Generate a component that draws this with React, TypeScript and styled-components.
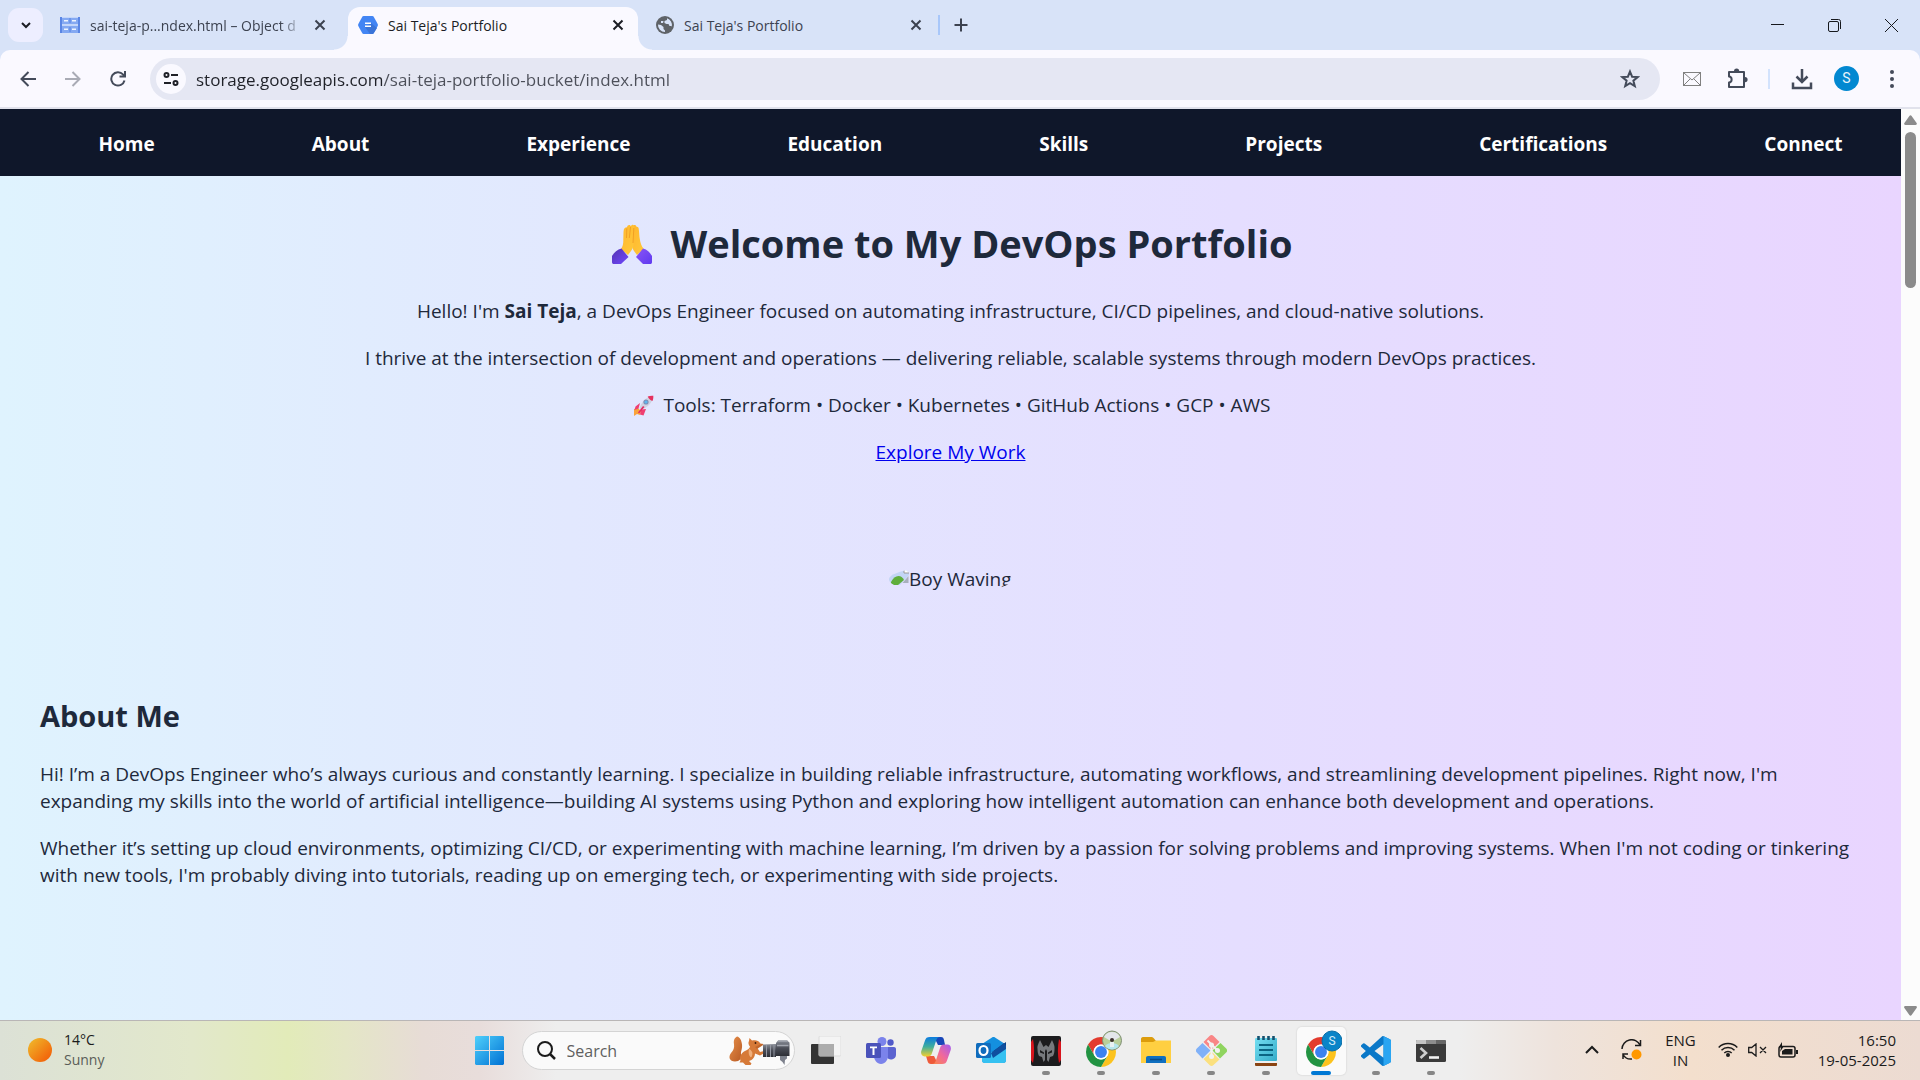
import React from "react";
import styled, { createGlobalStyle, css } from "styled-components";

const ui = `"Segoe UI", "Open Sans", "Noto Sans", sans-serif`;

const GlobalStyle = createGlobalStyle`
  * { box-sizing: border-box; }
  html, body { margin: 0; padding: 0; }
  body { font-family: ${ui}; overflow: hidden; }
  button { font: inherit; color: inherit; border: 0; padding: 0; background: none; cursor: pointer; }
  svg { display: block; flex: none; }
`;

/* ---------- window ---------- */

const Desktop = styled.div`
  display: flex;
  flex-direction: column;
  height: 100vh;
  overflow: hidden;
`;

const TabStrip = styled.header`
  flex: none;
  display: flex;
  align-items: flex-start;
  height: 50px;
  padding-left: 8px;
  background: #d8e3f8;
  color: #3c4250;
`;

const TabSearch = styled.button`
  display: grid;
  place-items: center;
  width: 35px;
  height: 34px;
  margin: 8px 7px 0 0;
  border-radius: 11px;
  background: #edeeff;
  color: #1b1d24;
`;

const Tabs = styled.div`
  display: flex;
  gap: 8px;
`;

const Tab = styled.div<{ $active?: boolean }>`
  position: relative;
  display: flex;
  align-items: center;
  width: 290px;
  height: 43px;
  margin-top: 7px;
  padding: 0 10px 8px 10px;
  border-radius: 12px 12px 0 0;
  ${(p) =>
    p.$active &&
    css`
      background: #faf9ff;
      color: #1b1d24;
      &::before,
      &::after {
        content: "";
        position: absolute;
        bottom: 0;
        width: 14px;
        height: 14px;
      }
      &::before {
        right: 100%;
        background: radial-gradient(circle at 0 0, transparent 13px, #faf9ff 14px);
      }
      &::after {
        left: 100%;
        background: radial-gradient(circle at 100% 0, transparent 13px, #faf9ff 14px);
      }
    `}
`;

const TabTitle = styled.button<{ $fade?: boolean }>`
  flex: 1;
  min-width: 0;
  margin-left: 10px;
  padding-top: 2px;
  overflow: hidden;
  white-space: nowrap;
  text-align: left;
  font-size: 14px;
  line-height: 20px;
  ${(p) =>
    p.$fade &&
    css`
      mask-image: linear-gradient(to right, #000 190px, transparent 214px);
    `}
`;

const TabClose = styled.button`
  display: grid;
  place-items: center;
  width: 20px;
  height: 20px;
`;

const StripRule = styled.span`
  width: 2px;
  height: 20px;
  margin: 15px 12px 0 2px;
  background: #a8c7fa;
`;

const NewTab = styled.button`
  display: grid;
  place-items: center;
  width: 18px;
  height: 50px;
`;

const WindowButtons = styled.div`
  display: flex;
  margin-left: auto;
  color: #16181d;
`;

const WindowButton = styled.button`
  display: grid;
  place-items: center;
  width: 57px;
  height: 50px;
`;

const ToolbarBack = styled.div`
  flex: none;
  background: #d8e3f8;
`;

const Toolbar = styled.div`
  display: flex;
  align-items: center;
  height: 59px;
  padding: 0 6px 0 5px;
  border-bottom: 2px solid #e1e2ec;
  border-radius: 10px 10px 0 0;
  background: #faf9ff;
  color: #444b5a;
`;

const ToolButton = styled.button<{ $dim?: boolean }>`
  display: grid;
  place-items: center;
  flex: none;
  width: 45px;
  height: 40px;
  color: ${(p) => (p.$dim ? "#a9abb5" : "inherit")};
`;

const AddressBar = styled.div`
  flex: 1;
  display: flex;
  align-items: center;
  height: 42px;
  margin: 0 9px 0 10px;
  padding: 0 20px 0 6px;
  border-radius: 21px;
  background: #e5e7f3;
`;

const SiteInfo = styled.button`
  display: grid;
  place-items: center;
  width: 30px;
  height: 30px;
  border-radius: 50%;
  background: #faf9ff;
  color: #1f2128;
`;

const Address = styled.input`
  flex: 1;
  min-width: 0;
  margin-left: 10px;
  padding: 2px 0 0;
  border: 0;
  outline: 0;
  font-family: ${ui};
  font-size: 17px;
  line-height: 26px;
  color: transparent;
  background: linear-gradient(to right, #1f2128 187px, #4c4f59 187px);
  background-clip: text;
  -webkit-background-clip: text;
`;

const ToolRule = styled.span`
  width: 2px;
  height: 20px;
  margin: 0 9px;
  background: #d3e3fd;
`;

const Avatar = styled.span`
  display: grid;
  place-items: center;
  width: 25px;
  height: 25px;
  border-radius: 50%;
  background: #0288d1;
  color: #e8f4fb;
  font: 14px/25px Roboto, sans-serif;
`;

/* ---------- web page ---------- */

const Viewport = styled.div`
  flex: 1;
  min-height: 0;
  display: flex;
`;

const Page = styled.div`
  flex: 1;
  min-width: 0;
  overflow: hidden;
  background: linear-gradient(to right, #dff3fe, #e2e8fe 30%, #e5deff 65%, #e9d5ff);
  color: #1e293b;
  font-size: 19px;
  line-height: 27px;
`;

const Nav = styled.nav`
  overflow: hidden;
  background: #0f172a;
`;

const NavList = styled.ul`
  display: flex;
  justify-content: space-around;
  margin: 0 -20px 0 20px;
  padding: 22px 0 18px;
  list-style: none;
`;

const NavLink = styled.a`
  color: #fff;
  font-weight: 700;
  text-decoration: none;
`;

const Hero = styled.section`
  padding: 41px 40px 50px;
  text-align: center;
`;

const HeroTitle = styled.h1`
  display: flex;
  align-items: center;
  justify-content: center;
  margin: 0 0 28px;
  font-size: 38px;
  line-height: 53px;

  svg {
    margin: 0 18px 0 4px;
  }
`;

const Text = styled.p`
  margin: 0 0 20px;
`;

const ToolsLine = styled(Text)`
  display: flex;
  align-items: center;
  justify-content: center;

  svg {
    margin: 0 9px 0 3px;
  }
`;

const ExploreLink = styled.a`
  color: #0000ee;
  text-decoration: underline;
`;

const Portrait = styled.div`
  display: flex;
  width: 123px;
  height: 27px;
  margin: 100px auto 0;
  overflow: hidden;
  border-radius: 50%;
  white-space: nowrap;
`;

const About = styled.section`
  padding: 53px 40px;
`;

const SectionTitle = styled.h2`
  margin: 0 0 25px;
  font-size: 29px;
  line-height: 40px;
`;

const ScrollTrack = styled.div`
  display: flex;
  flex-direction: column;
  align-items: center;
  width: 19px;
  padding: 6px 0 4px;
  background: #fcfcfc;
`;

const ScrollThumb = styled.div`
  width: 11px;
  height: 156px;
  margin: 7px 0 auto;
  border-radius: 6px;
  background: #8b8b8b;
`;

/* ---------- taskbar ---------- */

const Taskbar = styled.footer`
  flex: none;
  display: grid;
  grid-template-columns: 1fr auto 1fr;
  height: 60px;
  border-top: 1px solid #b9b6b6;
  background: linear-gradient(
    to right,
    #dce1d6 0,
    #e2e8cb 10%,
    #e2ebb9 15%,
    #e4e6c6 18%,
    #e7dcd6 22%,
    #e8dddb 25%,
    #eeeeee 29%,
    #eeeeee 76%,
    #eee3dc 81%,
    #f3dfcd 88%,
    #ecdbd2 100%
  );
  color: #1b1b1b;
  font-size: 15px;
  line-height: 20px;
`;

const Weather = styled.button`
  display: flex;
  align-items: center;
  gap: 12px;
  padding: 0 0 2px 28px;
  text-align: left;
  font-size: 14px;

  small {
    display: block;
    font-size: 14px;
    color: #5a5d58;
  }
`;

const Apps = styled.div`
  display: flex;
  align-items: center;
`;

const AppButton = styled.button<{ $active?: boolean }>`
  position: relative;
  display: grid;
  place-items: center;
  width: 55px;
  height: 58px;
  ${(p) =>
    p.$active &&
    css`
      &::before {
        content: "";
        position: absolute;
        inset: 5px 3px;
        border-radius: 5px;
        background: #fafafa;
        box-shadow: 0 0 1px 1px #e2e2e2;
      }
      svg {
        position: relative;
      }
    `}
`;

const Running = styled.span<{ $active?: boolean }>`
  position: absolute;
  bottom: 5px;
  left: 50%;
  transform: translateX(-50%);
  width: ${(p) => (p.$active ? 20 : 8)}px;
  height: 4px;
  border-radius: 2px;
  background: ${(p) => (p.$active ? "#0078d4" : "#868686")};
`;

const SearchBox = styled.label`
  display: flex;
  align-items: center;
  width: 273px;
  height: 39px;
  margin: 0 4px 0 5px;
  padding: 0 4px 0 14px;
  border: 1px solid #d4d4d4;
  border-radius: 20px;
  background: #fafafa;
`;

const SearchInput = styled.input`
  flex: 1;
  min-width: 0;
  margin-left: 11px;
  padding: 0;
  border: 0;
  outline: 0;
  background: none;
  font-family: ${ui};
  font-size: 16px;
  color: #1b1b1b;

  &::placeholder {
    color: #5f5f5f;
    opacity: 1;
  }
`;

const Tray = styled.div`
  display: flex;
  align-items: center;
  justify-content: flex-end;
  padding: 0 24px 2px 0;
`;

const TrayButton = styled.button<{ $gap?: number }>`
  margin-right: ${(p) => p.$gap ?? 0}px;
  text-align: center;
`;

const Clock = styled.button`
  text-align: right;
`;

/* ---------- icons ---------- */

type Shape = { w?: number; h?: number; box?: string; children: React.ReactNode; stroke?: number };

const Line = ({ w = 20, h = w, box = `0 0 ${w} ${h}`, stroke = 2, children }: Shape) => (
  <svg width={w} height={h} viewBox={box} fill="none" stroke="currentColor" strokeWidth={stroke} aria-hidden="true">
    {children}
  </svg>
);

const CloseIcon = () => (
  <Line w={12}>
    <path d="M1.5 1.5l9 9M10.5 1.5l-9 9" />
  </Line>
);

const BucketIcon = () => (
  <svg width="20" height="18" viewBox="0 0 20 18" aria-hidden="true">
    <path d="M0 1h20v16H0z" fill="#85a9f2" />
    <path d="M0 1h2v16H0zM18 1h2v16h-2z" fill="#5b86e5" />
    <path d="M2 1h16v1H2zM2 8h16v2H2z" fill="#c4d6fa" />
    <path d="M4 4h4v1.500H4zM12 4h4v1.500h-4zM4 12.500h4V14H4zM12 12.500h4V14h-4z" fill="#eef4ff" />
    <path d="M9 2h2v5H9zM9 11h2v5H9z" fill="#6c95ea" />
  </svg>
);

const HexIcon = () => (
  <svg width="20" height="18" viewBox="0 0 20 18" aria-hidden="true">
    <path d="M5.600 0h8.800c.6 0 1 .3 1.300.8l4 7.200c.3.600.3 1.300 0 1.900l-4 7.300c-.3.500-.7.800-1.300.8H5.600c-.6 0-1-.3-1.300-.8L.3 9.900C0 9.300 0 8.700.3 8.100l4-7.300C4.600.3 5 0 5.600 0z" fill="#4285f4" />
    <path d="M13 7l6 5-3.300 5.200c-.3.500-.7.800-1.300.8H12L7 11z" fill="#3a74d8" />
    <path d="M7 6.500h6V8H7zM7 9.500h6V11H7z" fill="#fff" />
  </svg>
);

const GlobeIcon = () => (
  <svg width="18" height="18" viewBox="0 0 18 18" aria-hidden="true">
    <circle cx="9" cy="9" r="9" fill="#5f6368" />
    <path d="M2 8.500l3 .5 2.500 2v2L9 14.500V16A7 7 0 012 8.500zM11 2.300V4L8.500 5v2l2 1h2l1 2h1.500l.8.500A7 7 0 0011 2.300zM5 5h2.500L7 7H5z" fill="#d8e3f8" />
  </svg>
);

const Hands = () => (
  <svg width="40" height="40" viewBox="0 0 40 40" role="img" aria-label="Folded hands">
    <defs>
      <linearGradient id="skin" x1="0" y1="0" x2="1" y2="1">
        <stop offset="0" stopColor="#ffb62e" />
        <stop offset="1" stopColor="#ffc93a" />
      </linearGradient>
      <linearGradient id="cuffL" x1="0" y1="0" x2="1" y2="1">
        <stop offset="0" stopColor="#5433b0" />
        <stop offset="1" stopColor="#7048ff" />
      </linearGradient>
      <linearGradient id="cuffR" x1="0" y1="0" x2="1" y2="1">
        <stop offset="0" stopColor="#8a55f5" />
        <stop offset="1" stopColor="#5f3af0" />
      </linearGradient>
    </defs>
    <path d="M21 2.500C21.500.5 24 .5 24.500 2.800c1.600-.2 2.300 1 2.300 2.700.5 3.500.4 6.500 1 9.500.6 3.700 1.500 7 4 10L25 31l-3-4c-1.500-2-1.500-4-1.500-7z" fill="url(#skin)" />
    <path d="M15 3.200c.5-2.600 3-3 3.800-1C20-.2 22.300.3 22.200 2.800L21.500 20c-.2 3-.9 5-2.500 7l-3 4-7-6c2-3 2.400-6 2.300-9.500L11.500 8c.1-3.500 1.500-4.800 3.500-4.800z" fill="url(#skin)" />
    <path d="M21.800 4L21 19M18.500 3l-1.200 11M14.800 4.500L14.500 14" stroke="#ee9720" strokeWidth=".8" fill="none" />
    <path d="M9.500 24.500l7 8.500L9 40H2c-1.300 0-2-.6-2-2v-6c2-3.500 5.500-6.500 9.500-7.500z" fill="url(#cuffL)" />
    <path d="M31 24.500L24 33l7 7h7c1.300 0 2-.6 2-2v-6c-2-3.500-5-6.500-9-7.500z" fill="url(#cuffR)" />
  </svg>
);

const Rocket = () => (
  <svg width="21" height="21" viewBox="0 0 21 21" role="img" aria-label="Rocket">
    <path d="M1 14l4-1 3 3-1 4-3-1-3 2z" fill="#f9a23b" />
    <path d="M7 8L2.500 11.500 1.500 15l4-1.500zM13 14l-2.500 6.500-3.500-1 1-5z" fill="#ef3f72" />
    <path d="M20 1c-6 0-11 5-13.500 12l1.500 1.800C15 12 20 7.500 20 1z" fill="#cfd3e2" />
    <path d="M20.300.7c-2-.2-4 .1-5.600.9 1 2 2.500 3.500 4.700 4.500.8-1.600 1.100-3.500.9-5.400z" fill="#e5325f" />
    <circle cx="13" cy="7" r="2.600" fill="#7f8db5" />
    <circle cx="13" cy="7" r="1.600" fill="#5cb8ee" />
    <path d="M10 11l-5 6.500 1 1L11.500 12z" fill="#e22b63" />
  </svg>
);

const BrokenImage = () => (
  <svg width="20" height="20" viewBox="0 0 20 20" aria-hidden="true">
    <path d="M0 2h15l5 5v12H0z" fill="#c3d5f5" />
    <path d="M15 2v5h5" fill="#fff" stroke="#9a9a9a" />
    <path d="M2 16c2-4 4.500-6 7.500-6 2.500 0 4 1.500 5.500 4l-6 5H2z" fill="#5fae3c" />
    <path d="M20 9l-9 10h9z" fill="#e4e1ff" />
    <path d="M19.500 10v7h-6z" fill="#a8b0bd" />
    <path d="M2 2.500h13" stroke="#9a9a9a" />
  </svg>
);

const ArrowHead = ({ down }: { down?: boolean }) => (
  <svg width="13" height="10" viewBox="0 0 13 10" aria-hidden="true">
    <path d={down ? "M1.500 0h10c1.200 0 1.800 1 1.100 2L7.600 9c-.6.900-1.600.9-2.200 0L.4 2C-.3 1 .3 0 1.500 0z" : "M1.500 10h10c1.200 0 1.800-1 1.100-2L7.600 1C7 .1 6 .1 5.400 1L.4 8c-.7 1-.1 2 1.100 2z"} fill="#8b8b8b" />
  </svg>
);

const ChromeShapes = () => (
  <>
    <path d="M3.220 12A24 24 0 0144.780 12H24A12 12 0 0013.610 30z" fill="#e33b2e" />
    <path d="M44.780 12A24 24 0 0124 48L34.390 30A12 12 0 0024 12z" fill="#fcc31e" />
    <path d="M24 48A24 24 0 013.220 12L13.610 30A12 12 0 0034.390 30z" fill="#229342" />
    <circle cx="24" cy="24" r="12" fill="#fff" />
    <circle cx="24" cy="24" r="9.500" fill="#3b82f0" />
  </>
);

const ChromeIcon = ({ work }: { work?: boolean }) => (
  <svg width="42" height="42" viewBox="0 0 42 42" aria-hidden="true">
    <g transform="translate(6 7) scale(.625)">
      <ChromeShapes />
    </g>
    {work ? (
      <>
        <circle cx="32" cy="11" r="10" fill="#0a84c8" stroke="#0b6fa8" />
        <text x="32" y="15" textAnchor="middle" fontFamily="Roboto, sans-serif" fontSize="12" fill="#d5ecf8">
          S
        </text>
      </>
    ) : (
      <>
        <circle cx="32" cy="10.500" r="9.500" fill="#b9cf9a" stroke="#7f8f75" />
        <path d="M24 7a9 9 0 0116 0l-5 3h-6z" fill="#e3e6ea" />
        <path d="M25 16c3-4 11-4 14 0-3 4.500-11 4.500-14 0z" fill="#b5e6ec" />
        <circle cx="32" cy="10" r="2" fill="#3b302c" />
        <path d="M30 12h4v5h-4z" fill="#e8f1f2" />
      </>
    )}
  </svg>
);

const StartIcon = () => (
  <svg width="29" height="29" viewBox="0 0 29 29" aria-hidden="true">
    <defs>
      <linearGradient id="win" x1="0" y1="0" x2="1" y2="1">
        <stop offset="0" stopColor="#4fd0fb" />
        <stop offset="1" stopColor="#0071d4" />
      </linearGradient>
    </defs>
    <path d="M1 0h13v14H0V1zM15 0h13l1 1v13H15zM0 15h14v14H1l-1-1zM15 15h14v13l-1 1H15z" fill="url(#win)" />
  </svg>
);

const Squirrel = () => (
  <svg width="62" height="30" viewBox="0 0 62 30" aria-hidden="true">
    <defs>
      <linearGradient id="fur" x1="0" y1="0" x2="1" y2="1">
        <stop offset="0" stopColor="#e8904a" />
        <stop offset="1" stopColor="#b85a24" />
      </linearGradient>
      <linearGradient id="lens" x1="0" y1="0" x2="0" y2="1">
        <stop offset="0" stopColor="#8a8e98" />
        <stop offset=".5" stopColor="#4a4d57" />
        <stop offset="1" stopColor="#2d2f36" />
      </linearGradient>
    </defs>
    <path d="M9 .5C6 2 5.500 5 6 8c.5 4-.5 6-3 9-3 4-1.500 8.500 4 8.500 5 0 6.500-3 6-7-.4-3.500 1.500-5.500 1-10C13.600 4.500 12 1 9 .5z" fill="url(#fur)" />
    <path d="M21 5l.5-3 2.500 2.500c4-.7 6.500 0 8 2.500 1.500 1 1.500 2.200.5 3l-3.500 1.500 3 4.500 4-1 .5 2-4.500 2.500-5-2c0 3-1.500 5-3.500 6.500l-2.500 1 2.500 2.500-1 1.500h-5L15 26.500h-3.500l1-2c-1.500-3.500 1-8 4.500-9.500 3-1.200 4.500-2.500 5-4.500-1.500-1.500-2-3.500-1-5.500z" fill="#d67a38" />
    <path d="M21 13c3 1.500 4.500 4 2.500 8-2 1-3.500-4-2.500-8z" fill="#f0b07c" />
    <path d="M27 11l7-3.500 1.500 1.200L29 13z" fill="#c2662a" />
    <circle cx="27.500" cy="7" r=".9" fill="#3a1c0b" />
    <path d="M35 8.500l13-.5v13H35z" fill="url(#lens)" />
    <path d="M38.500 9v12M42.500 9v12M46 9v12" stroke="#9498a3" />
    <path d="M48 7l2-2.500h9l2.500 2V20H48z" fill="url(#lens)" />
    <path d="M50 5h9.500M49 9.500h11.500" stroke="#a3a6b0" strokeWidth="1.500" />
    <path d="M52 20h7v2.500L57 24l-.5 5-2-3-2.500-2z" fill="#7d818c" />
  </svg>
);

const TaskViewIcon = () => (
  <svg width="30" height="29" viewBox="0 0 30 29" aria-hidden="true">
    <rect x="0" y="8" width="23" height="20" rx="1" fill="#333" />
    <rect x="8" y="0" width="22" height="20" rx="1" fill="#f4f4f4" stroke="#dcdcdc" />
    <path d="M8 8h15v12H8z" fill="#acacac" />
  </svg>
);

const TeamsIcon = () => (
  <svg width="30" height="27" viewBox="0 0 30 27" aria-hidden="true">
    <circle cx="24.500" cy="5.500" r="3.200" fill="#5059c9" />
    <path d="M20 10h8c1 0 2 .8 2 2v5.500a5 5 0 01-9 3z" fill="#5b63d0" />
    <circle cx="16" cy="4.500" r="4.500" fill="#7b83eb" />
    <path d="M9 10h13v9c0 4-3 8-7 8s-7-4-7-8z" fill="#7b83eb" />
    <rect x="0" y="6" width="15" height="15" rx="1.500" fill="#4a52ba" />
    <path d="M4 9.500h7v1.800H8.500V18h-2v-6.700H4z" fill="#fff" />
  </svg>
);

const CopilotIcon = () => (
  <svg width="30" height="27" viewBox="0 0 30 27" aria-hidden="true">
    <defs>
      <linearGradient id="cpA" x1="0" y1="0" x2="0" y2="1">
        <stop offset="0" stopColor="#0a7be0" />
        <stop offset=".5" stopColor="#3fae9c" />
        <stop offset="1" stopColor="#f4cf2e" />
      </linearGradient>
      <linearGradient id="cpB" x1="1" y1="0" x2="0" y2="1">
        <stop offset="0" stopColor="#a35cf0" />
        <stop offset=".5" stopColor="#f0689c" />
        <stop offset="1" stopColor="#fc8b45" />
      </linearGradient>
    </defs>
    <path d="M13 0h7c2 0 2.500 1 3 3l1 5h-7z" fill="#1846b8" />
    <path d="M17 27h-7c-2 0-3-1-3.500-3L5 19h8z" fill="#ee5a3a" />
    <path d="M9 0h10c-2 0-3 1-4 4l-4 12c-.7 2-1.500 3.500-4 3.500H3.500C1 19.500-.5 17 .3 14L4 3.500C4.700 1 6 0 9 0z" fill="url(#cpA)" />
    <path d="M21 27H11c2 0 3-1 4-4l4-12c.7-2 1.500-3.500 4-3.500h3.500c2.500 0 4 2.500 3.200 5.500L26 23.500c-.7 2.500-2 3.500-5 3.500z" fill="url(#cpB)" />
  </svg>
);

const OutlookIcon = () => (
  <svg width="30" height="27" viewBox="0 0 30 27" aria-hidden="true">
    <path d="M6 7l10-6.500c1-.6 2-.6 3 0L29 7l1 3v13c0 2-1 3-3 3H9c-2 0-3-1-3-3z" fill="#1490df" />
    <path d="M16 15L30 5v6l-13 9z" fill="#0a3f86" />
    <path d="M6 15h10l14-5v13c0 2-1 3-3 3H9c-2 0-3-1-3-3z" fill="#35c1f1" />
    <path d="M15 16L28 6l2 3v3l-13 9z" fill="#0f4f9f" />
    <rect x="0" y="6" width="15" height="15" rx="1.500" fill="#0f6cbd" />
    <ellipse cx="7.500" cy="13.500" rx="4" ry="4.500" fill="none" stroke="#fff" strokeWidth="2.200" />
  </svg>
);

const PredatorIcon = () => (
  <svg width="30" height="30" viewBox="0 0 30 30" aria-hidden="true">
    <rect width="30" height="30" rx="2" fill="#1c1c1e" />
    <path d="M0 6l2-3c1.500 8 1.500 16 0 24l-2-3zM30 6l-2-3c-1.500 8-1.500 16 0 24l2-3z" fill="#d8141c" />
    <path d="M9 4l3.500 7L15 9l2.500 2L21 4c1 3 3 5 2.500 9 0 3-.5 5-1.500 7l-3 1-1.500 5-1.500-2v-9l-1-2-1 2v9l-1.500 2L11 21l-3-1c-1-2-1.500-4-1.500-7C6 9 8 7 9 4z" fill="#77797d" />
    <path d="M9 14l4 2.500V18l-4-1.500zM21 14l-4 2.500V18l4-1.500z" fill="#1c1c1e" />
  </svg>
);

const FolderIcon = () => (
  <svg width="30" height="27" viewBox="0 0 30 27" aria-hidden="true">
    <path d="M0 2c0-1 .6-2 2-2h8c1 0 2 .4 3 1.500L15 4h13c1.300 0 2 .7 2 2v6H0z" fill="#dc9c0c" />
    <path d="M0 5h12l3-1.500h15V26H0z" fill="#ffcf41" />
    <path d="M5 26v-5c0-1.300.8-2 2-2h16c1.300 0 2 .8 2 2v5z" fill="#0f6fc0" />
    <path d="M9 22.500h12" stroke="#0a4a86" strokeWidth="1.500" />
  </svg>
);

const GitIcon = () => (
  <svg width="31" height="31" viewBox="0 0 31 31" aria-hidden="true">
    <path d="M13.500 1a3 3 0 014 0l6 6-8 8-8-8z" fill="#f98686" />
    <path d="M6.500 8l8 7.500-8 8L.8 17.500a3 3 0 010-4z" fill="#80b1f8" />
    <path d="M24.500 8l5.700 5.500a3 3 0 010 4l-6.200 6-7.500-8z" fill="#8fd45f" />
    <path d="M15.500 16.500l8 8-6 5.500a3 3 0 01-4 0l-6-6z" fill="#fbe07e" />
    <path d="M11.500 5.500l4 4v13M16 10l5 5" stroke="#f2f2f2" strokeWidth="2" fill="none" />
    <circle cx="15.500" cy="10" r="2.500" fill="#f2f2f2" />
    <circle cx="21.500" cy="15.500" r="2.500" fill="#f2f2f2" />
    <circle cx="15.500" cy="21.500" r="2.500" fill="#f2f2f2" />
  </svg>
);

const NotepadIcon = () => (
  <svg width="22" height="30" viewBox="0 0 22 30" aria-hidden="true">
    <defs>
      <linearGradient id="pad" x1="0" y1="0" x2="1" y2="1">
        <stop offset="0" stopColor="#74dff2" />
        <stop offset="1" stopColor="#35acc9" />
      </linearGradient>
    </defs>
    <rect y="25" width="22" height="5" rx="1" fill="#8a4412" />
    <rect y="24" width="22" height="3" fill="#f0f0f0" />
    <rect y="2" width="22" height="23" rx="1" fill="url(#pad)" />
    <path d="M4 9h14M4 14h14M4 19h14" stroke="#0b6583" strokeWidth="2" />
    <path d="M3.500 0v4M8.500 0v4M13.500 0v4M18.500 0v4" stroke="#14506e" strokeWidth="2.600" />
  </svg>
);

const CodeIcon = () => (
  <svg width="30" height="30" viewBox="0 0 24 24" aria-hidden="true">
    <path d="M23.150 2.587L18.210.210a1.494 1.494 0 0 0-1.705.290l-9.460 8.630-4.120-3.128a.999.999 0 0 0-1.276.057L.327 7.261A1 1 0 0 0 .326 8.740L3.899 12 .326 15.260a1 1 0 0 0 .001 1.479L1.650 17.940a.999.999 0 0 0 1.276.057l4.120-3.128 9.460 8.630a1.492 1.492 0 0 0 1.704.290l4.942-2.377A1.500 1.500 0 0 0 24 20.060V3.939a1.500 1.500 0 0 0-.850-1.352zm-5.146 14.861L10.826 12l7.178-5.448v10.896z" fill="#0a78c8" />
    <path d="M18 .1l5.150 2.487c.5.240.850.750.850 1.352V20.060c0 .6-.350 1.100-.850 1.352L18 23.900z" fill="#2aa5f2" />
  </svg>
);

const TerminalIcon = () => (
  <svg width="30" height="22" viewBox="0 0 30 22" aria-hidden="true">
    <rect width="30" height="22" rx="1.500" fill="#3a3a3a" />
    <path d="M0 4V1.500C0 .6.600 0 1.500 0H10v4z" fill="#c4c4c4" />
    <path d="M10 0h10v4H10z" fill="#8d8d8d" />
    <path d="M20 0h8.500c.9 0 1.500.6 1.500 1.500V4H20z" fill="#666" />
    <path d="M4.500 8l5.500 5-5.500 5" stroke="#cfcfcf" strokeWidth="2.600" fill="none" />
    <path d="M13 17.500h10" stroke="#f2f2f2" strokeWidth="2.600" />
  </svg>
);

/* ---------- data ---------- */

const navItems = ["Home", "About", "Experience", "Education", "Skills", "Projects", "Certifications", "Connect"];

const apps = [
  { name: "Task view", icon: <TaskViewIcon /> },
  { name: "Microsoft Teams", icon: <TeamsIcon /> },
  { name: "Copilot", icon: <CopilotIcon /> },
  { name: "Outlook", icon: <OutlookIcon /> },
  { name: "PredatorSense", icon: <PredatorIcon />, running: true },
  { name: "Chrome", icon: <ChromeIcon />, running: true },
  { name: "File Explorer", icon: <FolderIcon />, running: true },
  { name: "Git Bash", icon: <GitIcon />, running: true },
  { name: "Notepad", icon: <NotepadIcon />, running: true },
  { name: "Chrome, work profile", icon: <ChromeIcon work />, running: true, active: true },
  { name: "Visual Studio Code", icon: <CodeIcon />, running: true },
  { name: "Terminal", icon: <TerminalIcon />, running: true },
];

const tabs = [
  { title: "sai-teja-p...ndex.html – Object d", icon: <BucketIcon />, fade: true },
  { title: "Sai Teja's Portfolio", icon: <HexIcon />, active: true },
  { title: "Sai Teja's Portfolio", icon: <GlobeIcon /> },
];

/* ---------- sections ---------- */

const BrowserTabs = () => (
  <TabStrip>
    <TabSearch aria-label="Search tabs">
      <Line w={12} h={12}>
        <path d="M2 4l4 4 4-4" />
      </Line>
    </TabSearch>
    <Tabs>
      {tabs.map((t, i) => (
        <Tab key={i} $active={t.active}>
          {t.icon}
          <TabTitle $fade={t.fade}>{t.title}</TabTitle>
          <TabClose aria-label="Close tab">
            <CloseIcon />
          </TabClose>
        </Tab>
      ))}
    </Tabs>
    <StripRule />
    <NewTab aria-label="New tab">
      <Line w={14}>
        <path d="M7 .5v13M.5 7h13" />
      </Line>
    </NewTab>
    <WindowButtons>
      <WindowButton aria-label="Minimize">
        <Line w={13} stroke={1}>
          <path d="M0 5.500h13" />
        </Line>
      </WindowButton>
      <WindowButton aria-label="Restore">
        <Line w={13} stroke={1}>
          <rect x=".5" y="2.500" width="10" height="10" rx="1.500" />
          <path d="M3 .5h7.500a2 2 0 012 2V10" />
        </Line>
      </WindowButton>
      <WindowButton aria-label="Close">
        <Line w={13} stroke={1}>
          <path d="M0 0l13 13M13 0L0 13" />
        </Line>
      </WindowButton>
    </WindowButtons>
  </TabStrip>
);

const BrowserToolbar = () => (
  <ToolbarBack>
    <Toolbar>
      <ToolButton aria-label="Back">
        <Line w={16}>
          <path d="M16 8H2M8.500 1L1.500 8l7 7" />
        </Line>
      </ToolButton>
      <ToolButton $dim aria-label="Forward">
        <Line w={16}>
          <path d="M0 8h14M7.500 1l7 7-7 7" />
        </Line>
      </ToolButton>
      <ToolButton aria-label="Reload">
        <Line w={16}>
          <path d="M14.500 9.500A6.700 6.700 0 1113 3.400L14.500 5M15 0v5.500H9.500" />
        </Line>
      </ToolButton>
      <AddressBar>
        <SiteInfo aria-label="View site information">
          <Line w={16} h={14}>
            <circle cx="3.500" cy="3" r="2" />
            <path d="M8 3h7M1 11h7" />
            <circle cx="12.500" cy="11" r="2" />
          </Line>
        </SiteInfo>
        <Address aria-label="Address" defaultValue="storage.googleapis.com/sai-teja-portfolio-bucket/index.html" />
        <TabClose aria-label="Bookmark this tab">
          <Line w={20} stroke={2}>
            <path d="M10 2.500l2.100 5.200 5.600.4-4.300 3.600 1.400 5.500-4.800-3-4.800 3 1.400-5.500-4.300-3.600 5.600-.4z" />
          </Line>
        </TabClose>
      </AddressBar>
      <ToolButton aria-label="Mail checker">
        <Line w={18} h={14} stroke={1}>
          <g stroke="#808080">
            <rect x=".5" y=".5" width="17" height="13" />
            <path d="M1 1l8 7 8-7M1 13l6-6M17 13l-6-6" />
          </g>
        </Line>
      </ToolButton>
      <ToolButton aria-label="Extensions">
        <Line w={22} h={22}>
          <path d="M3 4h15v15H3v-4.500c3.500-.3 3.500-5.700 0-6z" strokeLinejoin="round" />
          <path d="M8 3a2.600 2.600 0 015.200 0zM19 9a2.600 2.600 0 010 5.200z" fill="currentColor" stroke="none" />
        </Line>
      </ToolButton>
      <ToolRule />
      <ToolButton aria-label="Downloads">
        <Line w={22} h={22} stroke={3}>
          <path d="M11 1v12M5.500 8.500L11 14l5.500-5.500M2 14.500V20h18v-5.500" strokeWidth="2.500" />
        </Line>
      </ToolButton>
      <ToolButton aria-label="Profile">
        <Avatar>S</Avatar>
      </ToolButton>
      <ToolButton aria-label="Menu">
        <svg width="4" height="18" viewBox="0 0 4 18" fill="currentColor" aria-hidden="true">
          <circle cx="2" cy="2" r="2" />
          <circle cx="2" cy="9" r="2" />
          <circle cx="2" cy="16" r="2" />
        </svg>
      </ToolButton>
    </Toolbar>
  </ToolbarBack>
);

const Portfolio = () => (
  <Page>
    <Nav>
      <NavList>
        {navItems.map((n) => (
          <li key={n}>
            <NavLink href={`#${n.toLowerCase()}`}>{n}</NavLink>
          </li>
        ))}
      </NavList>
    </Nav>
    <Hero id="home">
      <HeroTitle>
        <Hands />
        Welcome to My DevOps Portfolio
      </HeroTitle>
      <Text>
        Hello! I'm <strong>Sai Teja</strong>, a DevOps Engineer focused on automating infrastructure, CI/CD pipelines, and
        cloud-native solutions.
      </Text>
      <Text>
        I thrive at the intersection of development and operations — delivering reliable, scalable systems through modern
        DevOps practices.
      </Text>
      <ToolsLine>
        <Rocket />
        Tools: Terraform • Docker • Kubernetes • GitHub Actions • GCP • AWS
      </ToolsLine>
      <ExploreLink href="#projects">Explore My Work</ExploreLink>
      <Portrait>
        <BrokenImage />
        Boy Waving
      </Portrait>
    </Hero>
    <About id="about">
      <SectionTitle>About Me</SectionTitle>
      <Text>
        Hi! I’m a DevOps Engineer who’s always curious and constantly learning. I specialize in building reliable
        infrastructure, automating workflows, and streamlining development pipelines. Right now, I'm expanding my skills
        into the world of artificial intelligence—building AI systems using Python and exploring how intelligent
        automation can enhance both development and operations.
      </Text>
      <Text>
        Whether it’s setting up cloud environments, optimizing CI/CD, or experimenting with machine learning, I’m driven
        by a passion for solving problems and improving systems. When I'm not coding or tinkering with new tools, I'm
        probably diving into tutorials, reading up on emerging tech, or experimenting with side projects.
      </Text>
    </About>
  </Page>
);

const WindowsTaskbar = () => (
  <Taskbar>
    <Weather>
      <svg width="24" height="24" viewBox="0 0 24 24" aria-hidden="true">
        <defs>
          <linearGradient id="sun" x1="0" y1="0" x2="1" y2="1">
            <stop offset=".1" stopColor="#f0b429" />
            <stop offset=".8" stopColor="#f26a0c" />
          </linearGradient>
        </defs>
        <circle cx="12" cy="12" r="12" fill="url(#sun)" />
      </svg>
      <span>
        14°C
        <small>Sunny</small>
      </span>
    </Weather>
    <Apps>
      <AppButton aria-label="Start">
        <StartIcon />
      </AppButton>
      <SearchBox>
        <Line w={19}>
          <circle cx="8" cy="8" r="7" />
          <path d="M13 13l5 5" strokeWidth="2.500" />
        </Line>
        <SearchInput aria-label="Search" placeholder="Search" />
        <Squirrel />
      </SearchBox>
      {apps.map((a) => (
        <AppButton key={a.name} aria-label={a.name} $active={a.active}>
          {a.icon}
          {a.running && <Running $active={a.active} />}
        </AppButton>
      ))}
    </Apps>
    <Tray>
      <TrayButton $gap={22} aria-label="Show hidden icons">
        <Line w={14} h={9}>
          <path d="M1 8l6-6 6 6" />
        </Line>
      </TrayButton>
      <TrayButton $gap={23} aria-label="Update available">
        <Line w={21} h={21} stroke={1}>
          <path d="M1 10A9.500 9.500 0 0119 6M19.500 1v5.500H14M2 20v-5h5M2 15.500c2 3.500 5 5 9 4.500" strokeWidth="1.500" />
          <circle cx="15.500" cy="15.500" r="5" fill="#ff9800" stroke="none" />
        </Line>
      </TrayButton>
      <TrayButton $gap={22}>
        ENG
        <br />
        IN
      </TrayButton>
      <TrayButton $gap={10} aria-label="Wi-Fi">
        <Line w={20} h={15} stroke={1}>
          <path d="M.7 5.500a13 13 0 0118.600 0M3.500 8.300a9.200 9.200 0 0113 0M6.300 11a5.300 5.300 0 017.400 0" strokeWidth="1.500" />
          <circle cx="10" cy="13" r="2" fill="currentColor" stroke="none" />
        </Line>
      </TrayButton>
      <TrayButton $gap={11} aria-label="Muted">
        <Line w={19} h={14} stroke={1}>
          <path d="M.7 4.500h3L8 1v12L3.700 9.500h-3zM12 4l6 6M18 4l-6 6" strokeWidth="1.300" />
        </Line>
      </TrayButton>
      <TrayButton $gap={20} aria-label="Battery charging">
        <Line w={20} h={16} stroke={1}>
          <rect x="1" y="4.500" width="16" height="10.500" rx="2" strokeWidth="1.500" />
          <path d="M4 12.500V9l3-2h7.500v5.500zM18 8h2v4h-2zM4 0L.5 5.500H3L2 10l4-6H4z" fill="currentColor" stroke="none" />
        </Line>
      </TrayButton>
      <Clock>
        16:50
        <br />
        19-05-2025
      </Clock>
    </Tray>
  </Taskbar>
);

export default function App() {
  return (
    <Desktop>
      <GlobalStyle />
      <BrowserTabs />
      <BrowserToolbar />
      <Viewport>
        <Portfolio />
        <ScrollTrack aria-hidden="true">
          <ArrowHead />
          <ScrollThumb />
          <ArrowHead down />
        </ScrollTrack>
      </Viewport>
      <WindowsTaskbar />
    </Desktop>
  );
}
